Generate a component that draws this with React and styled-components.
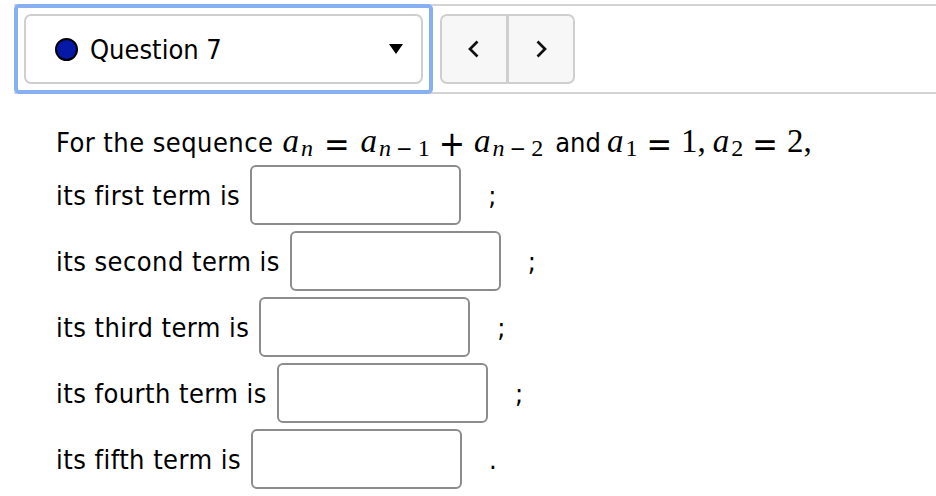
import React from "react";
import styled, { createGlobalStyle } from "styled-components";

const Global = createGlobalStyle`
  html, body { margin: 0; padding: 0; background: #fff; }
  body {
    font-family: "DejaVu Sans Condensed", "DejaVu Sans", sans-serif;
    font-stretch: condensed;
    font-variant-ligatures: none;
    color: #000;
  }
`;

const Page = styled.div`
  width: 936px;
  height: 496px;
  overflow: hidden;
`;

const Header = styled.div`
  display: flex;
  align-items: center;
  margin: 4px 0 0 14px;
  height: 86px;
  border-top: 2px solid #d4d4d4;
  border-bottom: 2px solid #d4d4d4;
`;

const FocusRing = styled.div`
  box-sizing: border-box;
  width: 419px;
  height: 90px;
  border: 4px solid #86b0f2;
  border-radius: 5px;
  padding: 6px;
  background: #fff;
`;

const Select = styled.div`
  box-sizing: border-box;
  height: 100%;
  display: flex;
  align-items: center;
  border: 2px solid #cfcfcf;
  border-radius: 7px;
  padding: 0 18px 0 29px;
  background: #fff;
`;

const Dot = styled.span`
  box-sizing: border-box;
  width: 23px;
  height: 23px;
  border-radius: 50%;
  background: #0618a6;
  border: 2.5px solid #000;
  flex: none;
`;

const SelectLabel = styled.span`
  margin-left: 12px;
  font-size: 27px;
  flex: 1;
  line-height: 1;
`;

const Nav = styled.div`
  box-sizing: border-box;
  margin-left: 7px;
  width: 135px;
  height: 70px;
  display: flex;
  border: 2px solid #cfcfcf;
  border-radius: 7px;
  background: #f7f7f7;
  overflow: hidden;
`;

const NavButton = styled.div`
  flex: 1;
  display: flex;
  align-items: center;
  justify-content: center;
  border-left: ${(p) => (p.$divider ? "3px solid #cfcfcf" : "none")};
`;

const Content = styled.div`
  padding: 26px 0 0 56px;
  font-size: 27px;
  letter-spacing: 0.45px;
`;

const Intro = styled.div`
  height: 44px;
  display: flex;
  align-items: baseline;
  white-space: nowrap;
`;

const Word = styled.span`
  letter-spacing: 0;
  margin-left: ${(p) => p.$ml || 0}px;
`;

const Math = styled.span`
  display: inline-flex;
  align-items: baseline;
  font-family: "Liberation Serif", "DejaVu Serif", serif;
  font-size: 33px;
  letter-spacing: 0;
  margin-left: ${(p) => p.$ml || 0}px;
`;

const Var = styled.span`
  font-style: italic;
  margin-left: ${(p) => p.$ml || 0}px;
`;

const Num = styled.span`
  margin-left: ${(p) => p.$ml || 0}px;
`;

const Sub = styled.span`
  display: inline-flex;
  align-items: baseline;
  font-size: 24px;
  position: relative;
  top: 4px;
  margin-left: 2px;
`;

const Op = styled.span`
  font-family: "DejaVu Sans", sans-serif;
  font-size: ${(p) => p.$size || 34}px;
  position: relative;
  top: ${(p) => (p.$sub ? 0 : 4)}px;
  margin: 0 ${(p) => p.$space || 11}px;
`;

const Rows = styled.div`
  display: flex;
  flex-direction: column;
  gap: 6px;
  margin-top: 1px;
`;

const Row = styled.div`
  display: flex;
  align-items: center;
  height: 60px;
  white-space: nowrap;
`;

const Box = styled.div`
  box-sizing: border-box;
  width: 211px;
  height: 60px;
  margin-left: 10px;
  border: 2px solid #8c8c8c;
  border-radius: 6px;
  background: #fff;
`;

const Punct = styled.span`
  margin-left: 27px;
`;

const Chevron = ({ dir }) => (
  <svg width="14" height="20" viewBox="0 0 14 20">
    <polyline
      points={dir === "left" ? "10.5,2.5 3,10 10.5,17.5" : "3.5,2.5 11,10 3.5,17.5"}
      fill="none"
      stroke="#111"
      strokeWidth="2.7"
    />
  </svg>
);

const Caret = () => (
  <svg width="14" height="10" viewBox="0 0 14 10">
    <polygon points="0,0 14,0 7,10" fill="#000" />
  </svg>
);

const terms = [
  { label: "its first term is", end: ";" },
  { label: "its second term is", end: ";" },
  { label: "its third term is", end: ";" },
  { label: "its fourth term is", end: ";" },
  { label: "its fifth term is", end: "." },
];

const SubIndex = ({ k }) => (
  <Sub>
    <Var>n</Var>
    <Op $sub $size={22} $space={5}>−</Op>
    <Num>{k}</Num>
  </Sub>
);

export default function App() {
  return (
    <Page>
      <Global />
      <Header>
        <FocusRing>
          <Select>
            <Dot />
            <SelectLabel>Question 7</SelectLabel>
            <Caret />
          </Select>
        </FocusRing>
        <Nav>
          <NavButton>
            <Chevron dir="left" />
          </NavButton>
          <NavButton $divider>
            <Chevron dir="right" />
          </NavButton>
        </Nav>
      </Header>
      <Content>
        <Intro>
          For the sequence
          <Math $ml={9}>
            <Var>a</Var>
            <Sub>
              <Var>n</Var>
            </Sub>
            <Op>=</Op>
            <Var>a</Var>
            <SubIndex k="1" />
            <Op $size={35} $space={9}>+</Op>
            <Var>a</Var>
            <SubIndex k="2" />
          </Math>
          <Word $ml={12}>and</Word>
          <Math $ml={6}>
            <Var>a</Var>
            <Sub>1</Sub>
            <Op $space={9}>=</Op>
            <Num>1,</Num>
            <Var $ml={7}>a</Var>
            <Sub>2</Sub>
            <Op $space={9}>=</Op>
            <Num>2,</Num>
          </Math>
        </Intro>
        <Rows>
          {terms.map((t) => (
            <Row key={t.label}>
              {t.label}
              <Box />
              <Punct>{t.end}</Punct>
            </Row>
          ))}
        </Rows>
      </Content>
    </Page>
  );
}
